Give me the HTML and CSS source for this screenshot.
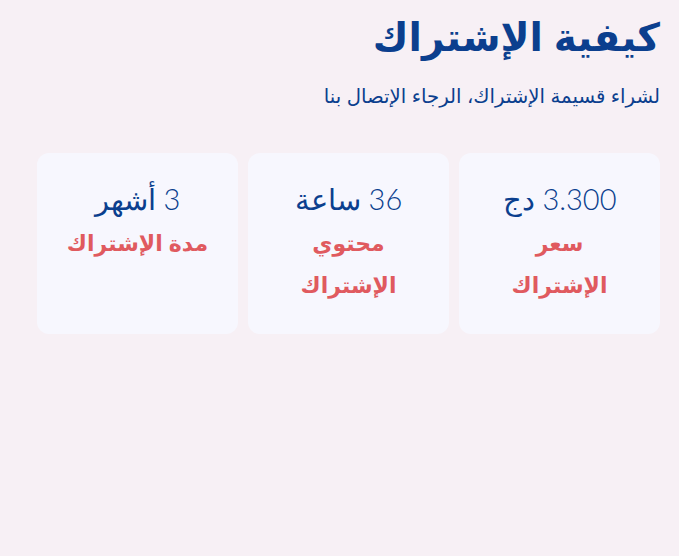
FILE: index.html
```html
<!DOCTYPE html>
<html lang="ar" dir="rtl">
<head>
<meta charset="utf-8">
<title>كيفية الإشتراك</title>
<link rel="stylesheet" href="styles.css">
</head>
<body>
<main class="page">
  <h1 class="title">كيفية الإشتراك</h1>
  <p class="subtitle">لشراء قسيمة الإشتراك، الرجاء الإتصال بنا</p>
  <section class="cards">
    <div class="card">
      <div class="value">3.300 دج</div>
      <div class="label">سعر<br>الإشتراك</div>
    </div>
    <div class="card">
      <div class="value">36 ساعة</div>
      <div class="label">محتوي<br>الإشتراك</div>
    </div>
    <div class="card">
      <div class="value">3 أشهر</div>
      <div class="label">مدة الإشتراك</div>
    </div>
  </section>
</main>
</body>
</html>
```
FILE: styles.css
```css
html, body {
  margin: 0;
  padding: 0;
  background: #f7f0f5;
}
body {
  font-family: "Liberation Sans", "DejaVu Sans", sans-serif;
  color: #0b3f8e;
}
.page {
  padding: 8px 19px 0 37px;
}
.title {
  margin: 0;
  font-size: 39px;
  font-weight: bold;
  line-height: 60px;
  color: #0b3f8e;
}
.subtitle {
  margin: 16px 0 0;
  font-size: 19.7px;
  line-height: 24px;
}
.cards {
  margin-top: 45px;
  display: grid;
  grid-template-columns: repeat(3, 1fr);
  gap: 10px;
}
.card {
  background: #f7f7fe;
  border-radius: 12px;
  height: 181px;
  padding-top: 26px;
  box-sizing: border-box;
  text-align: center;
}
.value {
  font-family: "Lato", "DejaVu Sans", sans-serif;
  font-weight: 300;
  font-size: 29px;
  line-height: 40px;
}
.label {
  margin-top: 4px;
  font-size: 22px;
  font-weight: bold;
  line-height: 42px;
  color: #e05a5f;
}
```
